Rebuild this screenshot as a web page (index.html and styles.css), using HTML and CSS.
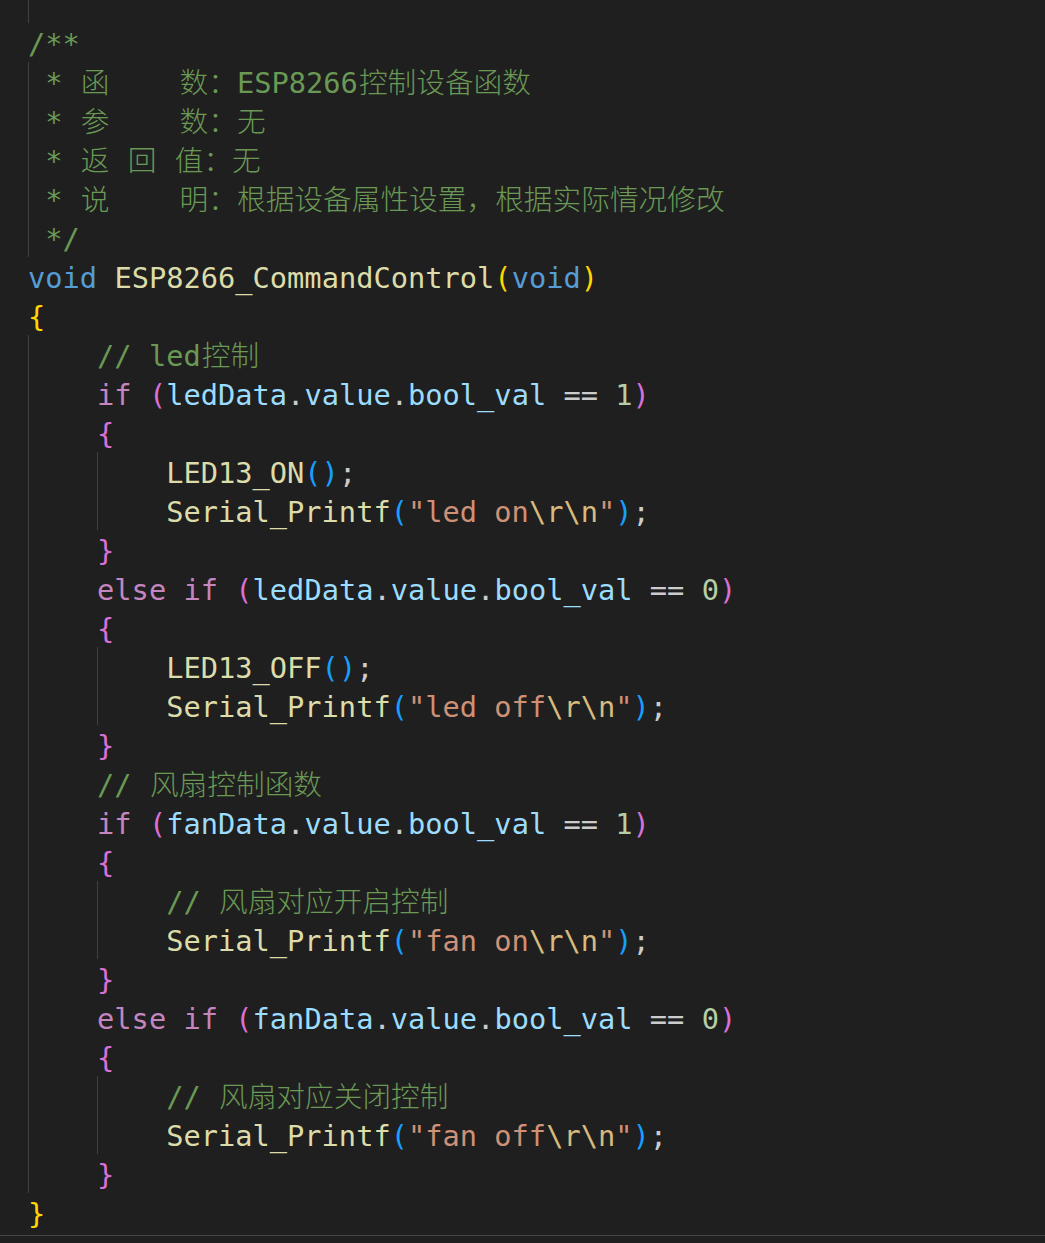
FILE: index.html
```html
<!DOCTYPE html>
<html lang="zh-CN">
<head>
<meta charset="utf-8">
<title>ESP8266_CommandControl</title>
<link rel="stylesheet" href="styles.css">
</head>
<body>
<div class="editor">
<div class="code">
<div class="ln top"><span class="g g4"></span></div>
<div class="ln"><span class="cm">/**</span></div>
<div class="ln"><span class="g g1"></span><span class="cm">* <span class="zh">函</span>    <span class="zh">数：</span>ESP8266<span class="zh">控制设备函数</span></span></div>
<div class="ln"><span class="g g1"></span><span class="cm">* <span class="zh">参</span>    <span class="zh">数：无</span></span></div>
<div class="ln"><span class="g g1"></span><span class="cm">* <span class="zh">返</span> <span class="zh">回</span> <span class="zh">值：无</span></span></div>
<div class="ln"><span class="g g1"></span><span class="cm">* <span class="zh">说</span>    <span class="zh">明：根据设备属性设置，根据实际情况修改</span></span></div>
<div class="ln"><span class="g g1"></span><span class="cm">*/</span></div>
<div class="ln"><span class="kw">void</span> <span class="fn">ESP8266_CommandControl</span><span class="b1">(</span><span class="kw">void</span><span class="b1">)</span></div>
<div class="ln"><span class="b1">{</span></div>
<div class="ln"><span class="g g4"></span><span class="cm">// led<span class="zh">控制</span></span></div>
<div class="ln"><span class="g g4"></span><span class="ctl">if</span> <span class="b2">(</span><span class="var">ledData</span>.<span class="var">value</span>.<span class="var">bool_val</span> == <span class="num">1</span><span class="b2">)</span></div>
<div class="ln"><span class="g g4"></span><span class="b2">{</span></div>
<div class="ln"><span class="g g4"></span><span class="g g4"></span><span class="fn">LED13_ON</span><span class="b3">()</span>;</div>
<div class="ln"><span class="g g4"></span><span class="g g4"></span><span class="fn">Serial_Printf</span><span class="b3">(</span><span class="str">"led on</span><span class="esc">\r\n</span><span class="str">"</span><span class="b3">)</span>;</div>
<div class="ln"><span class="g g4"></span><span class="b2">}</span></div>
<div class="ln"><span class="g g4"></span><span class="ctl">else</span> <span class="ctl">if</span> <span class="b2">(</span><span class="var">ledData</span>.<span class="var">value</span>.<span class="var">bool_val</span> == <span class="num">0</span><span class="b2">)</span></div>
<div class="ln"><span class="g g4"></span><span class="b2">{</span></div>
<div class="ln"><span class="g g4"></span><span class="g g4"></span><span class="fn">LED13_OFF</span><span class="b3">()</span>;</div>
<div class="ln"><span class="g g4"></span><span class="g g4"></span><span class="fn">Serial_Printf</span><span class="b3">(</span><span class="str">"led off</span><span class="esc">\r\n</span><span class="str">"</span><span class="b3">)</span>;</div>
<div class="ln"><span class="g g4"></span><span class="b2">}</span></div>
<div class="ln"><span class="g g4"></span><span class="cm">// <span class="zh">风扇控制函数</span></span></div>
<div class="ln"><span class="g g4"></span><span class="ctl">if</span> <span class="b2">(</span><span class="var">fanData</span>.<span class="var">value</span>.<span class="var">bool_val</span> == <span class="num">1</span><span class="b2">)</span></div>
<div class="ln"><span class="g g4"></span><span class="b2">{</span></div>
<div class="ln"><span class="g g4"></span><span class="g g4"></span><span class="cm">// <span class="zh">风扇对应开启控制</span></span></div>
<div class="ln"><span class="g g4"></span><span class="g g4"></span><span class="fn">Serial_Printf</span><span class="b3">(</span><span class="str">"fan on</span><span class="esc">\r\n</span><span class="str">"</span><span class="b3">)</span>;</div>
<div class="ln"><span class="g g4"></span><span class="b2">}</span></div>
<div class="ln"><span class="g g4"></span><span class="ctl">else</span> <span class="ctl">if</span> <span class="b2">(</span><span class="var">fanData</span>.<span class="var">value</span>.<span class="var">bool_val</span> == <span class="num">0</span><span class="b2">)</span></div>
<div class="ln"><span class="g g4"></span><span class="b2">{</span></div>
<div class="ln"><span class="g g4"></span><span class="g g4"></span><span class="cm">// <span class="zh">风扇对应关闭控制</span></span></div>
<div class="ln"><span class="g g4"></span><span class="g g4"></span><span class="fn">Serial_Printf</span><span class="b3">(</span><span class="str">"fan off</span><span class="esc">\r\n</span><span class="str">"</span><span class="b3">)</span>;</div>
<div class="ln"><span class="g g4"></span><span class="b2">}</span></div>
<div class="ln"><span class="b1">}</span></div>
</div>
<div class="footer"></div>
</div>
</body>
</html>
```

FILE: styles.css
```css
html, body {
  margin: 0;
  padding: 0;
  background: #1f1f1f;
}

.editor {
  width: 1045px;
  height: 1243px;
  overflow: hidden;
  background: #1f1f1f;
  display: flex;
  flex-direction: column;
}

.code {
  padding-left: 28px;
  font-family: "DejaVu Sans Mono", "Noto Sans CJK SC", monospace;
  font-size: 28.7px;
  color: #cccccc;
}

.ln {
  height: 39px;
  line-height: 43px;
  overflow: visible;
  white-space: pre;
}

.ln.top {
  height: 23px;
}

.g {
  display: inline-block;
  height: 39px;
  vertical-align: top;
  box-shadow: inset 1px 0 0 #404040;
}

.top .g {
  height: 23px;
}

.g1 { width: 1ch; }
.g4 { width: 4ch; }

.zh {
  font-family: "Noto Sans CJK SC", sans-serif;
  font-weight: 300;
  line-height: 1;
  padding-left: 1px;
}

.cm { color: #6a9955; }
.kw { color: #569cd6; }
.ctl { color: #c586c0; }
.fn { color: #dcdcaa; }
.var { color: #9cdcfe; }
.num { color: #b5cea8; }
.str { color: #ce9178; }
.esc { color: #d7ba7d; }
.b1 { color: #ffd700; }
.b2 { color: #da70d6; }
.b3 { color: #179fff; }

.footer {
  margin-top: 3px;
  border-top: 1px solid #474747;
  flex: 1;
  background: #1f1f1f;
}
```
